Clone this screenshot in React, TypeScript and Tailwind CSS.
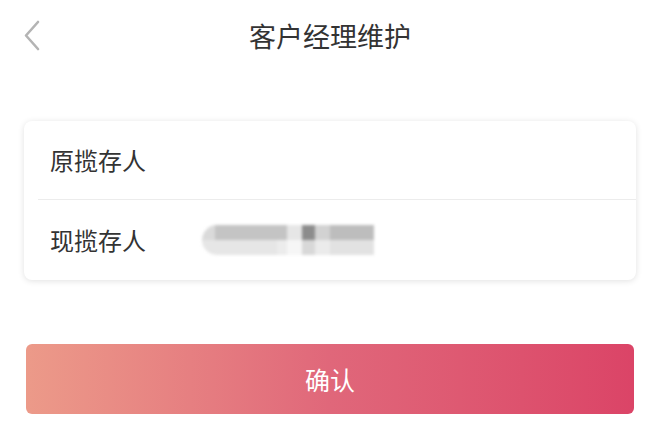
import React from "react";

export default function App() {
  const font = { fontFamily: '"Noto Sans CJK SC", "Noto Sans", sans-serif' };
  return (
    <div className="w-[660px] h-[429px] bg-white overflow-hidden" style={font}>
      <div className="relative h-[70px] flex items-center justify-center">
        <svg className="absolute left-[22px] top-[20px]" width="20" height="31" viewBox="0 0 20 31">
          <polyline points="16,2 4,15.5 16,29" fill="none" stroke="#b4b4b4" strokeWidth="2.6" strokeLinecap="round" strokeLinejoin="round" />
        </svg>
        <span className="text-[27px] text-[#333] leading-none">客户经理维护</span>
      </div>
      <div className="mt-[51px] mx-[24px] h-[159px] bg-white rounded-[8px] shadow-[0_1px_6px_rgba(0,0,0,0.12)] flex flex-col">
        <div className="h-[79px] pl-[14px]">
          <div className="h-full flex items-center pl-[12px] border-b border-[#ececec]">
            <span className="text-[24px] text-[#333] leading-none">原揽存人</span>
          </div>
        </div>
        <div className="flex-1 flex items-center pl-[26px]">
          <span className="text-[24px] text-[#333] leading-none">现揽存人</span>
          <div className="ml-[56px] flex flex-col w-[172px] h-[30px] blur-[1.5px] rounded-l-full overflow-hidden">
            <div className="flex h-[15px]">
              <div className="w-[13px] bg-[#dadada]" />
              <div className="w-[72px] bg-[#c4c4c4]" />
              <div className="w-[15px] bg-[#e6e6e6]" />
              <div className="w-[13px] bg-[#8c8c8c]" />
              <div className="w-[15px] bg-[#d2d2d2]" />
              <div className="w-[44px] bg-[#bdbdbd]" />
            </div>
            <div className="flex h-[15px]">
              <div className="w-[75px] bg-[#e6e6e6]" />
              <div className="w-[10px] bg-[#ececec]" />
              <div className="w-[15px] bg-[#f6f6f6]" />
              <div className="w-[13px] bg-[#d8d8d8]" />
              <div className="w-[15px] bg-[#ebebeb]" />
              <div className="w-[44px] bg-[#e2e2e2]" />
            </div>
          </div>
        </div>
      </div>
      <div className="mt-[64px] mx-[26px] h-[70px] rounded-[6px] bg-gradient-to-r from-[#ec9a89] via-[#e0677a] to-[#db4467] flex items-center justify-center">
        <span className="text-[25px] text-white leading-none">确认</span>
      </div>
    </div>
  );
}
